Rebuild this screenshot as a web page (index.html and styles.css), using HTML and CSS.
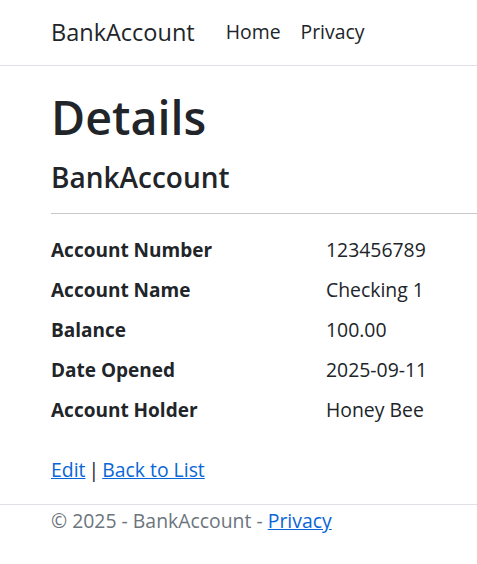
FILE: index.html
```html
<!DOCTYPE html>
<html lang="en">
<head>
<meta charset="utf-8">
<title>Details - BankAccount</title>
<link rel="stylesheet" href="styles.css">
</head>
<body>
<header class="navbar">
  <div class="nav-inner">
    <a class="brand" href="#">BankAccount</a>
    <nav class="nav-links">
      <a class="nav-link" href="#">Home</a>
      <a class="nav-link" href="#">Privacy</a>
    </nav>
  </div>
</header>
<main class="container">
  <h1 class="title">Details</h1>
  <div class="details">
    <h4 class="subtitle">BankAccount</h4>
    <hr class="rule">
    <dl class="fields">
      <dt>Account Number</dt><dd>123456789</dd>
      <dt>Account Name</dt><dd>Checking 1</dd>
      <dt>Balance</dt><dd>100.00</dd>
      <dt>Date Opened</dt><dd>2025-09-11</dd>
      <dt>Account Holder</dt><dd>Honey Bee</dd>
    </dl>
  </div>
  <div class="actions">
    <a href="#">Edit</a> | <a href="#">Back to List</a>
  </div>
</main>
<footer class="footer">
  <div class="footer-inner">
    &copy; 2025 - BankAccount - <a href="#">Privacy</a>
  </div>
</footer>
</body>
</html>
```

FILE: styles.css
```css
html, body {
  margin: 0;
  padding: 0;
}
body {
  font-family: "Open Sans", "Noto Sans", sans-serif;
  font-size: 19.4px;
  line-height: 30px;
  color: #212529;
  background: #fff;
}
a {
  color: #0a66d8;
}
.navbar {
  border-bottom: 1px solid #dee2e6;
  height: 66px;
  box-sizing: border-box;
}
.nav-inner {
  display: flex;
  align-items: center;
  height: 63px;
  padding-left: 51px;
}
.brand {
  font-size: 23.5px;
  color: #212529;
  text-decoration: none;
  margin-right: 21px;
}
.nav-links {
  display: flex;
}
.nav-link {
  color: #212529;
  text-decoration: none;
  padding: 0 10px;
}
.container {
  padding-left: 51px;
  padding-top: 21px;
}
.title {
  font-size: 46.6px;
  line-height: 60px;
  font-weight: 600;
  margin: 0 0 12px;
}
.subtitle {
  font-size: 28px;
  line-height: 36px;
  font-weight: 600;
  margin: 0 0 10px;
}
.rule {
  border: 0;
  border-top: 1px solid #c8c9ca;
  margin: 18px 0 21px;
}
.fields {
  display: grid;
  grid-template-columns: 275px 1fr;
  row-gap: 10px;
  margin: 0 0 30px;
}
.fields dt {
  font-weight: 700;
  font-size: 19px;
}
.fields dd {
  margin: 0;
}
.actions {
  padding-bottom: 19px;
  word-spacing: -2px;
}
.actions a {
  word-spacing: normal;
}
.footer {
  border-top: 1px solid #dee2e6;
  color: #6c757d;
}
.footer-inner {
  padding-left: 51px;
  line-height: 32px;
}
```
